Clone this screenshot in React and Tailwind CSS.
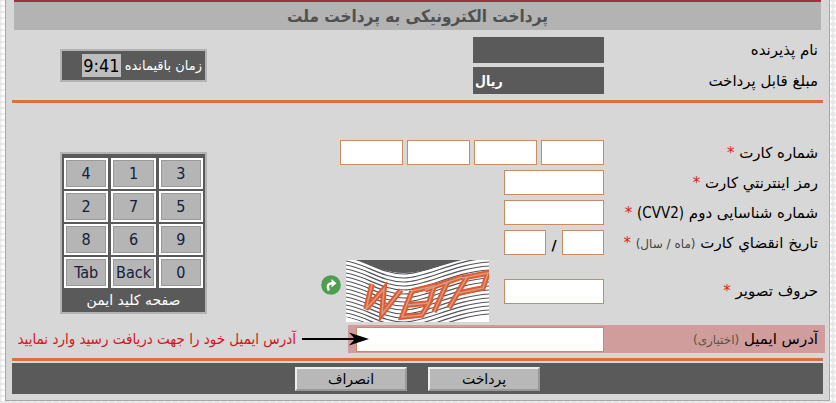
import { useState } from "react";

const KEYS = ["3", "1", "4", "5", "7", "2", "9", "6", "8", "0", "Back", "Tab"];

const inputClass = "h-[25px] border border-[#c98a68] bg-white px-1 text-sm text-black outline-none";

const actionClass = "h-6 w-28 border-2 border-[#eee] border-r-[#999] border-b-[#999] bg-[#b8b8b8] text-sm leading-5";

function Star() {
  return <span className="text-[#e01b1b]">*</span>;
}

function Row({ id, label, children }) {
  return (
    <div className="flex items-center">
      <label htmlFor={id} className="w-[219px] shrink-0 pr-[5px] text-[15px] leading-6 whitespace-nowrap">
        {label}
      </label>
      {children}
    </div>
  );
}

// Distorted W B T P, drawn twice: thick outline and pale core
function CaptchaLetters() {
  return (
    <>
      <path d="M26 24L20 49L38 29L36 54L55 30" />
      <path d="M66 31L56 57L76 55L83 43L62 45M66 31L88 26L83 43" />
      <path d="M79 30L116 17M101 23L88 52" />
      <path d="M121 17L103 48M116 18L142 13L137 28L113 33" />
    </>
  );
}

function Captcha() {
  const lines = Array.from({ length: 16 }, (_, i) => i * 4 + 1);
  return (
    <svg viewBox="0 0 143 62" className="h-[62px] w-[143px]" role="img" aria-label="captcha">
      <rect width="143" height="62" fill="#fff" />
      <g fill="none" stroke="#55555a" strokeWidth="1.2">
        {lines.map((y) => (
          <path key={y} d={`M0 ${y - 4}C20 ${y - 1} 36 ${y + 13} 58 ${y + 13}S108 ${y - 5} 143 ${y - 7}`} />
        ))}
      </g>
      <path d="M12 0C28 6 40 13 58 13S92 6 116 0Z" fill="#5a5a5a" />
      <path d="M0 57L16 62H0ZM143 57L122 62H143Z" fill="#fff" />
      <g fill="none" strokeLinejoin="miter">
        <g stroke="#e8582c" strokeWidth="5.500">
          <CaptchaLetters />
        </g>
        <g stroke="#c9a08c" strokeWidth="1.500">
          <CaptchaLetters />
        </g>
      </g>
    </svg>
  );
}

export default function App() {
  const [card, setCard] = useState(["", "", "", ""]);

  const handleCard = (index, value) => {
    setCard((prev) => prev.map((part, i) => (i === index ? value : part)));
  };

  return (
    <div
      dir="rtl"
      className="min-h-screen bg-[#f1f1f1] bg-[radial-gradient(#ffffff_35%,#e6e6e6_70%)] bg-[length:7px_6px] pr-[6px] pl-[5px] font-['DejaVu_Sans',sans-serif] text-black"
    >
      <main className="border-x border-b border-[#a9a9a9] bg-[#d7d7d7] px-[6px] pb-[6px]">
        {/* Header */}
        <h1 className="mx-[2px] flex h-[30px] items-center justify-center border-t-2 border-[#a03040] bg-[#b3b3b3] font-['DejaVu_Sans_Condensed','DejaVu_Sans',sans-serif] text-[17px] leading-7 font-bold text-[#505050]">
          پرداخت الکترونیکی به پرداخت ملت
        </h1>

        {/* Merchant info */}
        <section className="flex items-start justify-between pt-[7px] pb-[6px]">
          <div className="flex flex-col gap-1">
            <Row label="نام پذیرنده">
              <div className="h-[26px] w-[131px] bg-[#5a5a5a]" />
            </Row>
            <Row label="مبلغ قابل پرداخت">
              <div className="flex h-[27px] w-[131px] items-center justify-end bg-[#5a5a5a] px-[2px] font-['DejaVu_Sans_Condensed','DejaVu_Sans',sans-serif] text-sm font-bold text-white">
                ریال
              </div>
            </Row>
          </div>
          <div className="mt-3 ml-12 flex h-[33px] w-[147px] items-center gap-1 border-2 border-[#b3b3b3] bg-[#5a5a5a] pr-[3px] text-[13px] whitespace-nowrap text-white">
            <span>زمان باقیمانده</span>
            <span className="bg-[#bdbdbd] px-px font-['DejaVu_Sans_Condensed','DejaVu_Sans',sans-serif] text-lg leading-[23px] text-black">
              9:41
            </span>
          </div>
        </section>

        <hr className="border-t-[3px] border-[#d9713f]" />

        {/* Card details */}
        <form onSubmit={(e) => e.preventDefault()}>
          <div className="flex items-start justify-between pt-[37px]">
            <div className="flex flex-col gap-[5px]">
              <Row id="card-0" label={<>شماره کارت <Star /></>}>
                <div dir="ltr" className="flex gap-1">
                  {card.map((part, i) => (
                    <input
                      key={i}
                      id={`card-${i}`}
                      aria-label={`شماره کارت ${i + 1}`}
                      maxLength={4}
                      value={part}
                      onChange={(e) => handleCard(i, e.target.value)}
                      className={`${inputClass} w-[63px]`}
                    />
                  ))}
                </div>
              </Row>
              <Row id="pin" label={<>رمز اینترنتي کارت <Star /></>}>
                <input id="pin" type="password" className={`${inputClass} w-[100px]`} />
              </Row>
              <Row
                id="cvv2"
                label={
                  <>
                    شماره شناسایی دوم{" "}
                    <span className="font-['DejaVu_Sans_Condensed','DejaVu_Sans',sans-serif]">(CVV2)</span> <Star />
                  </>
                }
              >
                <input id="cvv2" type="password" className={`${inputClass} w-[100px]`} />
              </Row>
              <Row id="month" label={<>تاریخ انقضاي کارت <small className="text-xs text-[#444]">(ماه / سال)</small> <Star /></>}>
                <input id="month" maxLength={2} className={`${inputClass} w-[42px]`} />
                <span className="w-4 pt-1 text-center text-sm font-bold">/</span>
                <input aria-label="سال" maxLength={2} className={`${inputClass} w-[42px]`} />
              </Row>
              <Row id="captcha" label={<>حروف تصویر <Star /></>}>
                <input id="captcha" className={`${inputClass} ml-[15px] w-[100px]`} />
                <Captcha />
                <button type="button" aria-label="تصویر جدید" className="mr-[5px] pb-3">
                  <svg viewBox="0 0 20 20" className="size-5">
                    <circle cx="10" cy="10" r="9.8" fill="#4f9d50" />
                    <path d="M8 15.5C5.500 11.500 7 8.200 11.500 8.200" fill="none" stroke="#fff" strokeWidth="2.4" />
                    <path d="M10.500 4L15.500 8.300L10.500 12.500Z" fill="#fff" />
                  </svg>
                </button>
              </Row>
            </div>

            {/* Secure keypad */}
            <div className="mt-3 ml-12 w-[147px] border-2 border-[#b3b3b3] bg-[#5a5a5a] px-[2px] pt-1 text-white">
              <div className="grid grid-cols-3 gap-x-[3px] gap-y-[2px] font-['DejaVu_Sans_Condensed','DejaVu_Sans',sans-serif]">
                {KEYS.map((key) => (
                  <button
                    key={key}
                    type="button"
                    className="h-[31px] border-2 border-white bg-[#b5b5b5] text-base leading-6 text-[#14203c] inset-ring inset-ring-[#999]"
                  >
                    {key}
                  </button>
                ))}
              </div>
              <p className="text-center text-sm leading-6">صفحه کلید ایمن</p>
            </div>
          </div>

          {/* Email */}
          <div className="mt-[3px] -mr-[2px] flex items-center justify-between">
            <div className="relative flex h-7 items-center bg-[#d09c9c] pl-2">
              <label htmlFor="email" className="w-[221px] pr-[7px] text-[15px]">
                آدرس ایمیل <small className="text-xs text-[#554]">(اختیاری)</small>
              </label>
              <input id="email" type="email" className={`${inputClass} w-[248px]`} />
              <svg viewBox="0 0 68 14" className="absolute -left-[46px] h-[14px] w-[68px]" aria-hidden="true">
                <path d="M0 7H54" stroke="#000" strokeWidth="2" />
                <path d="M67 7L47 0.500L53 7L47 13.500Z" fill="#000" />
              </svg>
            </div>
            <p className="ml-1 flex-1 pr-[52px] font-['DejaVu_Sans_Condensed','DejaVu_Sans',sans-serif] text-[15px] whitespace-nowrap text-[#d8141c]">
              آدرس ایمیل خود را جهت دریافت رسید وارد نمایید
            </p>
          </div>

          {/* Actions */}
          <div className="mt-[5px] border-t-[3px] border-[#d9713f] pt-[2px]">
            <div className="flex h-[31px] items-center justify-center gap-[21px] bg-[#5a5a5a]">
              <button type="submit" className={actionClass}>
                پرداخت
              </button>
              <button type="button" className={actionClass}>
                انصراف
              </button>
            </div>
          </div>
        </form>
      </main>
    </div>
  );
}
